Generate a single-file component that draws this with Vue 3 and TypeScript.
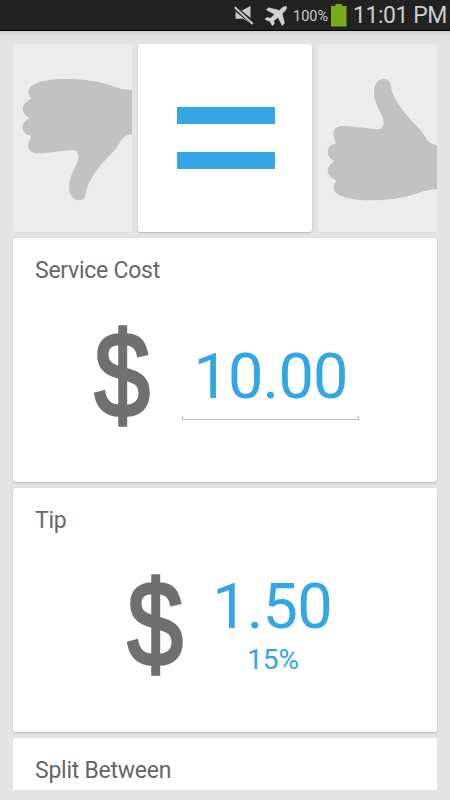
<script setup lang="ts">
import { ref } from 'vue'

type Rating = 'bad' | 'fair' | 'good'

const rating = ref<Rating>('fair')
const cost = ref<number>(10)
const tip = ref<number>(1.5)
const percent = ref<number>(15)

const thumb =
  'M396 180 C372 181 352 174 330 166 C290 152 245 147 195 147 C150 147 112 154 94 168 C83 178 83 194 94 205 C84 214 68 220 68 236 C68 250 79 258 88 265 C79 270 68 277 68 293 C68 308 80 316 93 317 C90 325 85 340 85 350 C86 363 98 370 117 370 C152 369 185 362 217 360 C228 360 235 367 236 380 C236 405 207 430 207 472 C208 494 217 511 238 511 C265 509 251 483 272 450 C294 408 325 382 347 357 C361 341 365 315 396 313 Z'
</script>

<template>
  <div class="screen">
    <header class="status">
      <svg class="mute" viewBox="0 0 20 19" width="20" height="19">
        <path d="M1.500 4.500H8L16.500 0V17.500L9 12.800H1.500Z" fill="#c9c9c9" />
        <path d="M-1 .5L21 18.500" stroke="#222" stroke-width="4.500" />
        <path d="M.8 1.300L18.800 18" stroke="#c9c9c9" stroke-width="2" />
      </svg>
      <svg class="plane" viewBox="0 0 22 20" width="22" height="20">
        <path
          d="M21.4 .6C20 0 18.300 .8 17 2L14.300 4.400L3.500 1.800L1.500 3.800L9.500 8.300L5.800 12.200L1.800 11.500L0 13.400L4.800 15.200L7.300 19.600L9.200 18L8.800 14.700L13 11.200L17.200 19.500L19.400 17.300L17.200 7.500L19.800 5C21.400 3.400 22 1.600 21.400 .6Z"
          fill="#d2d2d2"
          stroke="#d2d2d2"
          stroke-width=".6"
        />
      </svg>
      <span class="level">100%</span>
      <svg class="battery" viewBox="0 0 16 23" width="16" height="23">
        <path d="M4.500 0H11V2H15.500V22.500H0V2H4.500Z" fill="#7bac17" />
      </svg>
      <span class="clock">11:01 PM</span>
    </header>

    <main class="content">
      <nav class="ratings">
        <div class="tile" :class="{ active: rating === 'bad' }" @click="rating = 'bad'">
          <svg viewBox="39 42 357 564" width="119" height="188"><path :d="thumb" fill="#c2c2c2" /></svg>
        </div>
        <div class="tile middle" :class="{ active: rating === 'fair' }" @click="rating = 'fair'">
          <i class="bar"></i>
          <i class="bar"></i>
        </div>
        <div class="tile" :class="{ active: rating === 'good' }" @click="rating = 'good'">
          <svg viewBox="54 42 357 564" width="119" height="188">
            <path :d="thumb" transform="translate(15 658) scale(1 -1)" fill="#c2c2c2" />
          </svg>
        </div>
      </nav>

      <section class="card">
        <h2>Service Cost</h2>
        <div class="row cost">
          <span class="dollar">$</span>
          <span class="field">{{ cost.toFixed(2) }}</span>
        </div>
      </section>

      <section class="card">
        <h2>Tip</h2>
        <div class="row tip">
          <span class="dollar">$</span>
          <div class="amount">
            <span class="value">{{ tip.toFixed(2) }}</span>
            <span class="percent">{{ percent }}%</span>
          </div>
        </div>
      </section>

      <section class="card last">
        <h2>Split Between</h2>
      </section>
    </main>
  </div>
</template>

<style>
body {
  margin: 0;
  background: #e4e4e4;
}
</style>

<style scoped>
.screen {
  width: 450px;
  height: 800px;
  overflow: hidden;
  background: #e4e4e4;
  font-family: Roboto, sans-serif;
}
.status {
  box-sizing: border-box;
  height: 31px;
  display: flex;
  justify-content: flex-end;
  align-items: flex-start;
  background: #222;
  border-bottom: 1px solid #000;
  color: #cdcdcd;
  white-space: nowrap;
}
.mute {
  margin: 6px 11px 0 0;
}
.plane {
  margin: 6px 6px 0 0;
}
.level {
  width: 36px;
  margin-right: 2px;
  font-size: 14.500px;
  line-height: 33px;
}
.battery {
  margin: 4px 6px 0 0;
}
.clock {
  width: 97px;
  font-size: 23px;
  line-height: 31px;
  letter-spacing: -0.45px;
}
.content {
  box-sizing: border-box;
  height: 769px;
  padding: 13px 13px 10px;
  display: flex;
  flex-direction: column;
  gap: 6px;
  background: linear-gradient(#cfcfcf, #dfdfdf 5px, #e4e4e4 12px);
}
.ratings {
  display: flex;
  gap: 6px;
  height: 188px;
}
.tile {
  width: 119px;
  border-radius: 3px;
  background: #ececec;
  overflow: hidden;
  box-shadow: 0 1px 1px #dedede;
}
.tile svg {
  display: block;
}
.middle {
  box-sizing: border-box;
  width: 174px;
  padding-left: 2px;
  display: flex;
  flex-direction: column;
  align-items: center;
  justify-content: center;
  gap: 28px;
}
.active {
  background: #fff;
  box-shadow: 0 1px 2px #b5b5b5;
}
.bar {
  width: 98px;
  height: 17px;
  background: #33a6e3;
}
.card {
  height: 244px;
  flex: none;
  border-radius: 3px;
  background: #fff;
  box-shadow: 0 1px 2px #b5b5b5;
}
.last {
  height: 52px;
  border-radius: 3px 3px 0 0;
  box-shadow: none;
}
h2 {
  margin: 0;
  padding: 19px 22px 0;
  font-size: 23px;
  line-height: 27px;
  font-weight: 400;
  letter-spacing: -0.25px;
  color: #666;
}
.row {
  display: flex;
  align-items: flex-start;
}
.dollar {
  width: 66px;
  font-family: "Liberation Sans", Arial, sans-serif;
  font-size: 120px;
  line-height: 120px;
  color: #707070;
  -webkit-text-stroke: 3.500px #707070;
  transform: scaleX(0.83);
}
.cost {
  padding: 30px 0 0 76px;
}
.tip {
  padding: 29px 0 0 109px;
}
.field {
  box-sizing: border-box;
  width: 177px;
  height: 74px;
  margin: 32px 0 0 27px;
  text-align: center;
  font-size: 63px;
  line-height: 61px;
  letter-spacing: -0.8px;
  color: #33a6e3;
  background:
    linear-gradient(#bbb, #bbb) left bottom / 1px 4px no-repeat,
    linear-gradient(#bbb, #bbb) right bottom / 1px 4px no-repeat,
    linear-gradient(#bbb, #bbb) bottom / 100% 1px no-repeat;
}
.amount {
  width: 118px;
  margin: 7px 0 0 25px;
  display: flex;
  flex-direction: column;
  align-items: center;
  color: #33a6e3;
}
.value {
  font-size: 63px;
  line-height: 74px;
  letter-spacing: -0.8px;
}
.percent {
  margin: -1px 0 0 2px;
  font-size: 28px;
  line-height: 33px;
}
</style>
